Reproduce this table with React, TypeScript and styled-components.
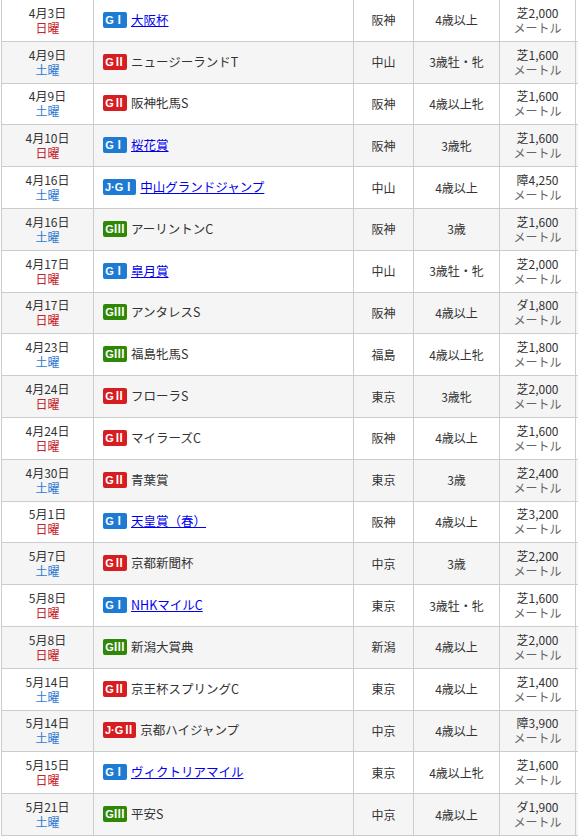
import React from "react";
import styled, { createGlobalStyle } from "styled-components";

const GlobalStyle = createGlobalStyle`
  html, body { margin: 0; padding: 0; overflow: hidden; background: #fff; }
  body { font-family: "Noto Sans CJK JP", "Noto Sans", sans-serif; color: #333; }
`;

type Grade = "G1" | "G2" | "G3" | "JG1" | "JG2";

interface Race {
  date: string;
  day: "土曜" | "日曜";
  grade: Grade;
  name: string;
  link?: boolean;
  venue: string;
  age: string;
  dist: string;
}

const races: Race[] = [
  { date: "4月3日", day: "日曜", grade: "G1", name: "大阪杯", link: true, venue: "阪神", age: "4歳以上", dist: "芝2,000" },
  { date: "4月9日", day: "土曜", grade: "G2", name: "ニュージーランドT", venue: "中山", age: "3歳牡・牝", dist: "芝1,600" },
  { date: "4月9日", day: "土曜", grade: "G2", name: "阪神牝馬S", venue: "阪神", age: "4歳以上牝", dist: "芝1,600" },
  { date: "4月10日", day: "日曜", grade: "G1", name: "桜花賞", link: true, venue: "阪神", age: "3歳牝", dist: "芝1,600" },
  { date: "4月16日", day: "土曜", grade: "JG1", name: "中山グランドジャンプ", link: true, venue: "中山", age: "4歳以上", dist: "障4,250" },
  { date: "4月16日", day: "土曜", grade: "G3", name: "アーリントンC", venue: "阪神", age: "3歳", dist: "芝1,600" },
  { date: "4月17日", day: "日曜", grade: "G1", name: "皐月賞", link: true, venue: "中山", age: "3歳牡・牝", dist: "芝2,000" },
  { date: "4月17日", day: "日曜", grade: "G3", name: "アンタレスS", venue: "阪神", age: "4歳以上", dist: "ダ1,800" },
  { date: "4月23日", day: "土曜", grade: "G3", name: "福島牝馬S", venue: "福島", age: "4歳以上牝", dist: "芝1,800" },
  { date: "4月24日", day: "日曜", grade: "G2", name: "フローラS", venue: "東京", age: "3歳牝", dist: "芝2,000" },
  { date: "4月24日", day: "日曜", grade: "G2", name: "マイラーズC", venue: "阪神", age: "4歳以上", dist: "芝1,600" },
  { date: "4月30日", day: "土曜", grade: "G2", name: "青葉賞", venue: "東京", age: "3歳", dist: "芝2,400" },
  { date: "5月1日", day: "日曜", grade: "G1", name: "天皇賞（春）", link: true, venue: "阪神", age: "4歳以上", dist: "芝3,200" },
  { date: "5月7日", day: "土曜", grade: "G2", name: "京都新聞杯", venue: "中京", age: "3歳", dist: "芝2,200" },
  { date: "5月8日", day: "日曜", grade: "G1", name: "NHKマイルC", link: true, venue: "東京", age: "3歳牡・牝", dist: "芝1,600" },
  { date: "5月8日", day: "日曜", grade: "G3", name: "新潟大賞典", venue: "新潟", age: "4歳以上", dist: "芝2,000" },
  { date: "5月14日", day: "土曜", grade: "G2", name: "京王杯スプリングC", venue: "東京", age: "4歳以上", dist: "芝1,400" },
  { date: "5月14日", day: "土曜", grade: "JG2", name: "京都ハイジャンプ", venue: "中京", age: "4歳以上", dist: "障3,900" },
  { date: "5月15日", day: "日曜", grade: "G1", name: "ヴィクトリアマイル", link: true, venue: "東京", age: "4歳以上牝", dist: "芝1,600" },
  { date: "5月21日", day: "土曜", grade: "G3", name: "平安S", venue: "中京", age: "4歳以上", dist: "ダ1,900" },
];

const gradeColor: Record<Grade, string> = {
  G1: "#1e7bd4",
  JG1: "#1e7bd4",
  G2: "#d61d22",
  JG2: "#d61d22",
  G3: "#2f8706",
};

const gradeLabel: Record<Grade, string> = {
  G1: "GⅠ",
  G2: "GⅡ",
  G3: "GⅢ",
  JG1: "J·GⅠ",
  JG2: "J·GⅡ",
};

const Table = styled.div`
  margin-left: 1px;
  width: 680px;
`;

const Row = styled.div<{ $odd: boolean }>`
  display: grid;
  grid-template-columns: 93px 260px 60px 86px 76px 104px;
  background: ${(p) => (p.$odd ? "#f5f5f5" : "#ffffff")};
`;

const Cell = styled.div<{ $align?: "left" | "center"; $first?: boolean }>`
  box-sizing: border-box;
  height: 41.8px;
  border-right: 1px solid #cccccc;
  border-bottom: 1px solid #cccccc;
  border-left: ${(p) => (p.$first ? "1px solid #cccccc" : "none")};
  display: flex;
  flex-direction: column;
  justify-content: center;
  align-items: ${(p) => (p.$align === "left" ? "flex-start" : "center")};
  padding: ${(p) => (p.$align === "left" ? "0 0 1px 9px" : "0 0 1px 0")};
  font-size: 12px;
  line-height: 15px;
  color: #333;
  white-space: nowrap;
`;

const DayText = styled.span<{ $sun: boolean }>`
  color: ${(p) => (p.$sun ? "#c4232a" : "#2f7bd0")};
`;

const NameWrap = styled.div`
  display: flex;
  align-items: center;
  gap: 4px;
`;

const Badge = styled.span<{ $grade: Grade }>`
  display: inline-flex;
  align-items: center;
  justify-content: center;
  box-sizing: border-box;
  height: 16px;
  min-width: 24px;
  padding: 0 2px;
  border-radius: 2px;
  background: ${(p) => gradeColor[p.$grade]};
  color: #fff;
  font-family: "Liberation Sans", "Noto Sans CJK JP", sans-serif;
  font-weight: bold;
  font-size: 11px;
  line-height: 16px;
`;

const NameLink = styled.a`
  color: #0000ee;
  text-decoration: underline;
  font-size: 12.5px;
  line-height: 18px;
`;

const NameText = styled.span`
  color: #333;
  font-size: 12.5px;
  line-height: 18px;
`;

const Unit = styled.span`
  color: #666;
`;

export default function App() {
  return (
    <>
      <GlobalStyle />
      <Table>
        {races.map((r, i) => (
          <Row key={i} $odd={i % 2 === 1}>
            <Cell $first>
              <span>{r.date}</span>
              <DayText $sun={r.day === "日曜"}>{r.day}</DayText>
            </Cell>
            <Cell $align="left">
              <NameWrap>
                <Badge $grade={r.grade}>{gradeLabel[r.grade]}</Badge>
                {r.link ? (
                  <NameLink href="#">{r.name}</NameLink>
                ) : (
                  <NameText>{r.name}</NameText>
                )}
              </NameWrap>
            </Cell>
            <Cell>{r.venue}</Cell>
            <Cell>{r.age}</Cell>
            <Cell>
              <span>{r.dist}</span>
              <Unit>メートル</Unit>
            </Cell>
            <Cell />
          </Row>
        ))}
      </Table>
    </>
  );
}
